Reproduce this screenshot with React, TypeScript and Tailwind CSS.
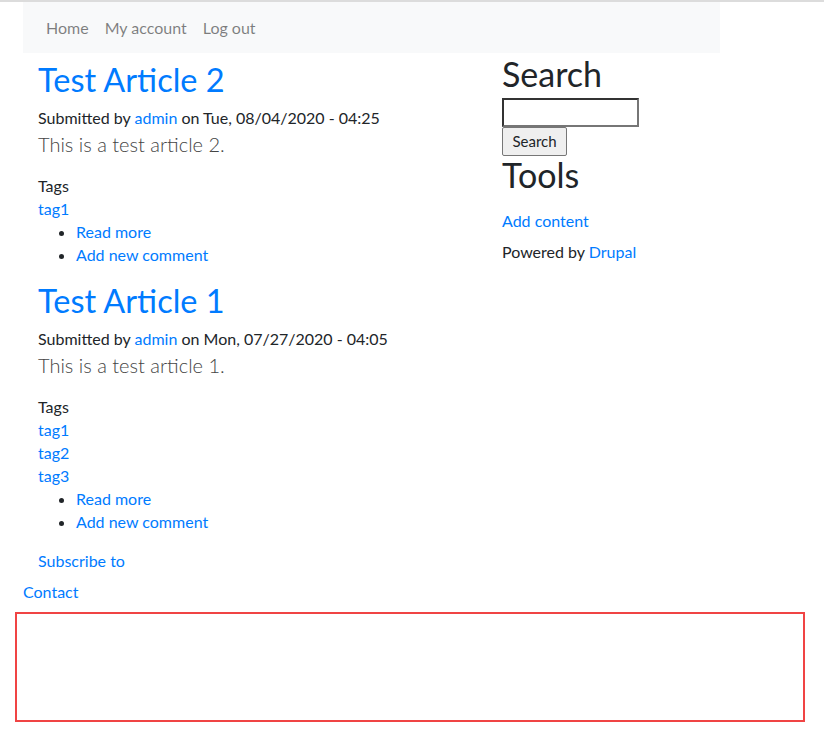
import React from "react";

const link = "text-[#007bff]";

function Article({ n, date, tags }: { n: number; date: string; tags: string[] }) {
  return (
    <article>
      <h2 className={`${link} text-[32.5px] leading-[38px] font-normal mb-[7px]`}>Test Article {n}</h2>
      <div className="text-[16px] leading-[24px] text-[#212529]">
        Submitted by <span className={link}>admin</span> on {date}
      </div>
      <p className="text-[20px] leading-[28px] font-light text-[#444] mb-[16px]">This is a test article {n}.</p>
      <div className="text-[16px] leading-[23px] text-[#212529]">Tags</div>
      {tags.map((t) => (
        <div key={t} className={`${link} text-[16px] leading-[23px]`}>{t}</div>
      ))}
      <ul className="list-disc pl-[38px] mb-[16px] text-[16px] leading-[23px] marker:text-[#212529]">
        <li className={link}>Read more</li>
        <li className={link}>Add new comment</li>
      </ul>
    </article>
  );
}

export default function App() {
  return (
    <div className="min-h-[744px] bg-white border-t-2 border-[#dcdcdc] font-['Lato',sans-serif] text-[#212529]">
      <div className="ml-[23px] w-[697px]">
        <nav className="h-[51px] bg-[#f8f9fa] flex items-center px-[15px]">
          {["Home", "My account", "Log out"].map((t) => (
            <span key={t} className="px-[8px] text-[16px] text-[rgba(0,0,0,0.5)]">{t}</span>
          ))}
        </nav>
        <div className="flex">
          <main className="w-[464px] px-[15px] pt-[8px]">
            <Article n={2} date="Tue, 08/04/2020 - 04:25" tags={["tag1"]} />
            <Article n={1} date="Mon, 07/27/2020 - 04:05" tags={["tag1", "tag2", "tag3"]} />
            <div className={`${link} text-[16px] leading-[24px]`}>Subscribe to</div>
          </main>
          <aside className="w-[233px] px-[15px] pt-[2px]">
            <h2 className="text-[34px] leading-[38px] text-[#212529] mb-[5px]">Search</h2>
            <input className="block w-[137px] h-[29px] border-2 border-[#767676] border-t-[#333] border-l-[#333] bg-white" />
            <button className="block h-[29px] w-[65px] text-[15px] bg-[#efefef] border border-[#767676] rounded-[2px] text-[#212529]">Search</button>
            <h2 className="text-[34px] leading-[38px] text-[#212529]">Tools</h2>
            <div className={`${link} text-[16px] leading-[24px] mt-[15px]`}>Add content</div>
            <div className="text-[16px] leading-[24px] mt-[7px]">
              Powered by <span className={link}>Drupal</span>
            </div>
          </aside>
        </div>
        <div className={`${link} text-[16px] leading-[24px] mt-[7px]`}>Contact</div>
      </div>
      <div className="ml-[15px] mt-[8px] w-[790px] h-[110px] border-2 border-[#f04444]" />
    </div>
  );
}
